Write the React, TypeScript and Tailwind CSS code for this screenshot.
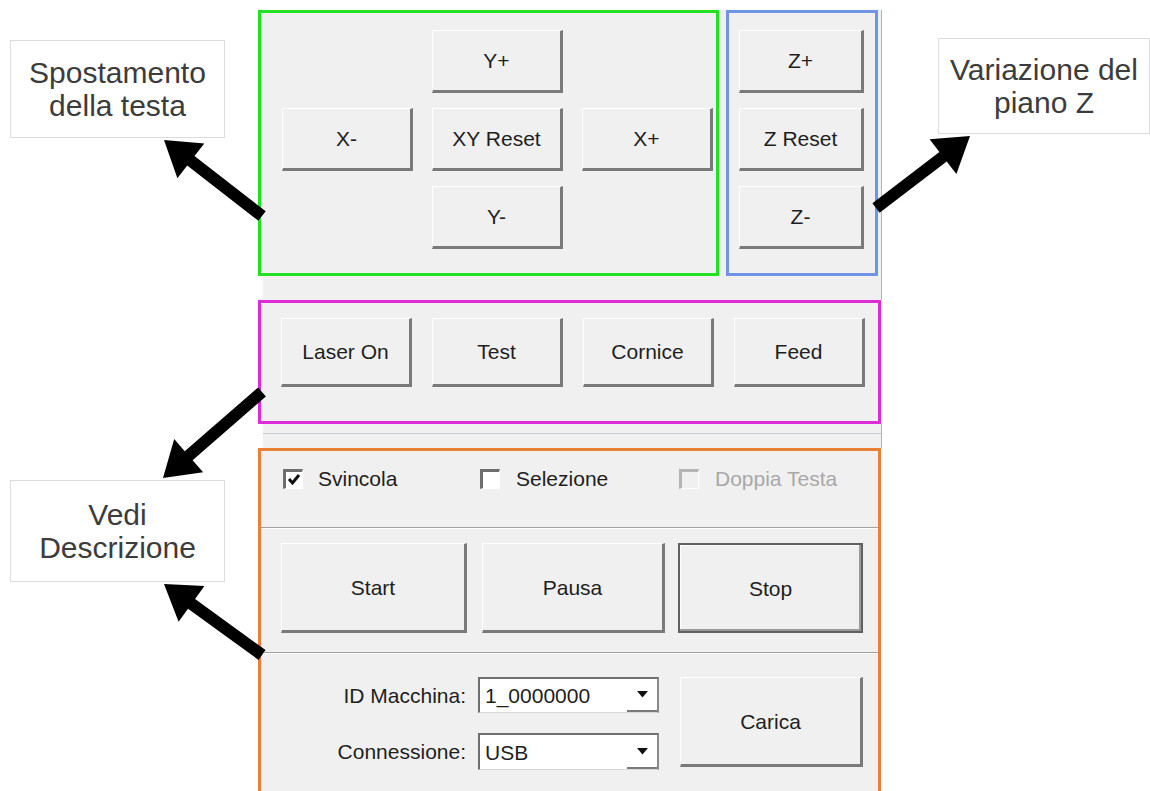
import React from 'react';

type Pt = [number, number];

// polygon for a thick arrow, tail -> tip
function arrowPoints(tail: Pt, tip: Pt, shaft = 12, headLen = 34, headHalf = 22) {
  const dx = tip[0] - tail[0];
  const dy = tip[1] - tail[1];
  const len = Math.hypot(dx, dy);
  const ux = dx / len;
  const uy = dy / len;
  const nx = -uy;
  const ny = ux;
  const bx = tip[0] - ux * headLen;
  const by = tip[1] - uy * headLen;
  const h = shaft / 2;
  const pts: Pt[] = [
    [tail[0] + nx * h, tail[1] + ny * h],
    [bx + nx * h, by + ny * h],
    [bx + nx * headHalf, by + ny * headHalf],
    tip,
    [bx - nx * headHalf, by - ny * headHalf],
    [bx - nx * h, by - ny * h],
    [tail[0] - nx * h, tail[1] - ny * h],
  ];
  return pts.map((p) => `${p[0].toFixed(1)},${p[1].toFixed(1)}`).join(' ');
}

const arrows: [Pt, Pt][] = [
  [[262, 216], [164, 140]],
  [[876, 208], [970, 136]],
  [[262, 392], [163, 478]],
  [[262, 655], [164, 584]],
];

function WinButton({ label, className = '' }: { label: string; className?: string }) {
  return (
    <div
      className={`flex items-center justify-center bg-[#f0f0f0] border-t border-l border-r-[3px] border-b-[3px] border-t-white border-l-white border-r-[#7a7a7a] border-b-[#7a7a7a] text-[21px] text-[#1e1e1e] leading-none ${className}`}
    >
      {label}
    </div>
  );
}

function CheckBox({ checked = false, disabled = false }: { checked?: boolean; disabled?: boolean }) {
  return (
    <div
      className={
        disabled
          ? 'w-[20px] h-[20px] shrink-0 border-t-[3px] border-l-[3px] border-r border-b border-t-[#b4b4b4] border-l-[#b4b4b4] border-r-white border-b-white bg-[#f0f0f0]'
          : 'w-[20px] h-[20px] shrink-0 border-t-[3px] border-l-[3px] border-r border-b border-t-[#6e6e6e] border-l-[#6e6e6e] border-r-white border-b-white bg-white flex items-center justify-center'
      }
    >
      {checked && (
        <svg width="14" height="13" viewBox="0 0 14 13">
          <polyline points="2,6 5.5,10 12,2" fill="none" stroke="#111" strokeWidth="3" />
        </svg>
      )}
    </div>
  );
}

function Combo({ value }: { value: string }) {
  return (
    <div className="w-[181px] h-full bg-white border-t-2 border-l-2 border-r-2 border-b border-t-[#707070] border-l-[#707070] border-r-[#8a8a8a] border-b-[#d8d8d8] flex items-center">
      <span className="flex-1 pl-[5px] text-[21px] text-[#1e1e1e] leading-none">{value}</span>
      <div className="w-[30px] h-full flex items-center justify-center border-b-2 border-[#7a7a7a]">
        <svg width="11" height="7" viewBox="0 0 11 7">
          <polygon points="0,0 11,0 5.5,6.5" fill="#111" />
        </svg>
      </div>
    </div>
  );
}

function Note({ lines, className = '' }: { lines: string[]; className?: string }) {
  return (
    <div
      className={`bg-white border border-[#dcdcdc] flex flex-col items-center justify-center text-[30px] leading-[33px] text-[#3c3c3c] ${className}`}
    >
      {lines.map((l) => (
        <span key={l}>{l}</span>
      ))}
    </div>
  );
}

export default function App() {
  return (
    <div className="relative w-[1150px] h-[791px] overflow-hidden bg-white flex font-['Liberation_Sans',Arial,sans-serif]">
      {/* left notes */}
      <div className="w-[258px] shrink-0 flex flex-col">
        <Note lines={['Spostamento', 'della testa']} className="ml-[10px] mt-[40px] w-[215px] h-[98px]" />
        <Note lines={['Vedi', 'Descrizione']} className="ml-[10px] mt-[342px] w-[215px] h-[102px]" />
      </div>

      {/* control panel */}
      <div className="w-[624px] shrink-0 flex flex-col pt-[10px]">
        <div className="flex h-[266px] shrink-0 bg-[#f0f0f0]">
          <div className="w-[461px] border-[3px] border-[#22e022] grid grid-cols-[131px_131px_131px] grid-rows-[63px_63px_63px] gap-x-[19px] gap-y-[15px] pl-[21px] pt-[17px]">
            <div />
            <WinButton label="Y+" />
            <div />
            <WinButton label="X-" />
            <WinButton label="XY Reset" />
            <WinButton label="X+" />
            <div />
            <WinButton label="Y-" />
            <div />
          </div>
          <div className="ml-[7px] w-[152px] border-[3px] border-[#6f94e3] flex flex-col gap-[15px] pl-[10px] pt-[17px]">
            <WinButton label="Z+" className="w-[125px] h-[63px]" />
            <WinButton label="Z Reset" className="w-[125px] h-[63px]" />
            <WinButton label="Z-" className="w-[125px] h-[63px]" />
          </div>
          <div className="flex-1 border-r border-[#b4b4b4]" />
        </div>

        <div className="h-[24px] shrink-0 ml-[5px] bg-[#f0f0f0] border-r border-[#b4b4b4]" />

        <div className="h-[124px] w-[623px] shrink-0 bg-[#f0f0f0] border-[3px] border-[#dd2bd8] flex items-start pt-[15px] pl-[20px] gap-[20px]">
          <WinButton label="Laser On" className="w-[131px] h-[69px]" />
          <WinButton label="Test" className="w-[131px] h-[69px]" />
          <WinButton label="Cornice" className="w-[131px] h-[69px]" />
          <WinButton label="Feed" className="w-[131px] h-[69px]" />
        </div>

        <div className="h-[24px] shrink-0 ml-[5px] bg-[#f0f0f0] border-r border-[#b4b4b4]">
          <div className="mt-[9px] h-px bg-[#c2cbd6]" />
        </div>

        <div className="w-[623px] h-[360px] shrink-0 bg-[#f0f0f0] border-[3px] border-[#ea8035] flex flex-col">
          <div className="h-[76px] flex items-start pt-[17px] pl-[22px] text-[21px] leading-none">
            <div className="w-[197px] flex items-center">
              <CheckBox checked />
              <span className="ml-[15px] text-[#1e1e1e]">Svincola</span>
            </div>
            <div className="w-[199px] flex items-center">
              <CheckBox />
              <span className="ml-[16px] text-[#1e1e1e]">Selezione</span>
            </div>
            <div className="flex items-center">
              <CheckBox disabled />
              <span className="ml-[16px] text-[#a8a8a8]">Doppia Testa</span>
            </div>
          </div>
          <div className="h-px bg-[#a0a0a0]" />
          <div className="h-px bg-white" />

          <div className="h-[123px] flex items-start pt-[14px] pl-[20px]">
            <WinButton label="Start" className="w-[186px] h-[90px]" />
            <WinButton label="Pausa" className="ml-[15px] w-[183px] h-[90px]" />
            <div className="ml-[13px] w-[185px] h-[90px] flex items-center justify-center border-2 border-[#606060] shadow-[inset_-2px_-2px_0_#9a9a9a,inset_1px_1px_0_#ffffff] text-[21px] text-[#1e1e1e] leading-none">
              Stop
            </div>
          </div>
          <div className="h-px bg-[#a0a0a0]" />
          <div className="h-px bg-white" />

          <div className="flex items-start pt-[23px]">
            <div className="flex flex-col gap-[20px]">
              <div className="flex items-center h-[36px]">
                <span className="w-[205px] text-right text-[21px] text-[#1e1e1e] leading-none">ID Macchina:</span>
                <div className="ml-[12px] h-full">
                  <Combo value="1_0000000" />
                </div>
              </div>
              <div className="flex items-center h-[37px]">
                <span className="w-[205px] text-right text-[21px] text-[#1e1e1e] leading-none">Connessione:</span>
                <div className="ml-[12px] h-full">
                  <Combo value="USB" />
                </div>
              </div>
            </div>
            <WinButton label="Carica" className="ml-[21px] w-[183px] h-[90px]" />
          </div>
        </div>
      </div>

      {/* right note */}
      <div className="flex-1 flex flex-col">
        <Note lines={['Variazione del', 'piano Z']} className="ml-[56px] mt-[38px] w-[212px] h-[96px]" />
      </div>

      {/* arrows drawn over everything */}
      <svg className="absolute inset-0 pointer-events-none" width="1150" height="791" viewBox="0 0 1150 791">
        {arrows.map(([tail, tip], i) => (
          <polygon key={i} points={arrowPoints(tail, tip)} fill="#000" />
        ))}
      </svg>
    </div>
  );
}
